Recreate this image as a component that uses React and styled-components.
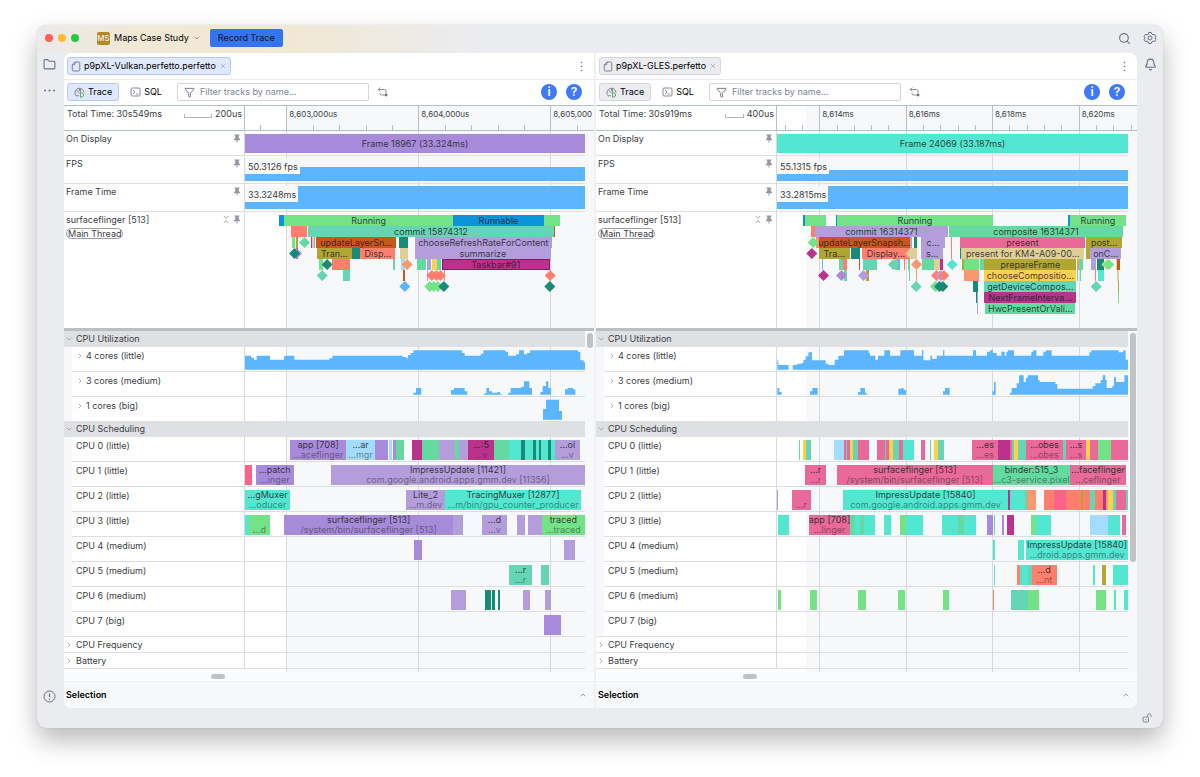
import React, { useState } from 'react';
import styled, { createGlobalStyle } from 'styled-components';
import { Search, Bell, Folder, ChevronDown, ChevronRight, ChevronUp, X, Filter } from 'lucide-react';

const c = {
  purple: '#a78bda',
  lilac: '#b39ddb',
  turq: '#53e6d1',
  green: '#74e388',
  sea: '#66d5b3',
  mint: '#64d9a0',
  runnable: '#0b94da',
  blue: '#5cb5ff',
  sky: '#a4dcff',
  brown: '#c7571b',
  olive: '#b0a632',
  coral: '#ff7f6e',
  teal: '#178a78',
  magenta: '#b9328b',
  tan: '#dfce96',
  yellow: '#fdd04f',
  salmon: '#f7996c',
  pink: '#e96a98',
  rose: '#ff6488',
};

// Slices are [start, end, color, title, subtitle], diamonds are [time, color]
const vulkan = {
  file: 'p9pXL-Vulkan.perfetto.perfetto',
  active: true,
  total: '30s549ms',
  scale: '200us',
  scaleWidth: 28,
  view: [15, 1035],
  shadeFrom: 138,
  major: [[139, '8,603,000us'], [535, '8,604,000us'], [931, '8,605,000']],
  minor: [60, 218, 297, 377, 456, 614, 693, 773, 852, 1010],
  frame: 'Frame 18967 (33.324ms)',
  frameColor: c.purple,
  fps: '50.3126 fps',
  fpsHeight: 14,
  frameTime: '33.3248ms',
  thumb: 15,
  threads: [
    { slices: [[117, 132, c.runnable], [132, 640, c.green, 'Running'], [640, 911, c.runnable, 'Runnable'], [911, 960, c.green]] },
    { slices: [[153, 201, c.coral], [204, 942, c.sea, 'commit 15874312'], [942, 946, c.brown]] },
    {
      slices: [[155, 166, c.green], [168, 173, c.olive], [212, 215, c.magenta], [217, 222, c.tan], [222, 226, c.lilac],
        [228, 469, c.brown, 'updateLayerSn…'], [477, 504, c.teal], [525, 935, c.lilac, 'chooseRefreshRateForContent']],
      diamonds: [[192, c.mint]],
    },
    {
      slices: [[167, 173, c.brown], [232, 335, c.olive, 'Tran…'], [336, 361, c.teal], [361, 466, c.coral, 'Disp…'],
        [480, 503, c.tan], [525, 932, c.lilac, 'summarize']],
      diamonds: [[168, c.purple], [162, c.teal]],
    },
    {
      slices: [[238, 248, c.green], [276, 330, c.coral], [460, 464, c.sea], [484, 496, c.sky], [530, 557, c.mint],
        [560, 574, c.lilac], [575, 592, c.yellow], [592, 604, c.mint], [605, 929, c.magenta, 'Taskbar#91', null, true]],
      diamonds: [[260, c.teal], [500, c.salmon]],
    },
    {
      slices: [[309, 329, c.sea], [489, 494, c.brown], [560, 563, c.lilac], [612, 615, c.lilac]],
      diamonds: [[245, c.sea], [574, c.coral], [588, c.coral], [600, c.coral], [929, c.coral]],
    },
    { slices: [], diamonds: [[493, c.blue], [568, c.green], [580, c.green], [592, c.green], [610, c.teal], [928, c.teal]] },
  ],
  cores: [
    [[15, 42], [33, 36], [42, 30], [50, 42], [90, 30], [132, 40], [137, 42], [163, 30], [268, 34], [277, 42], [488, 38],
      [498, 34], [504, 44], [512, 50], [520, 58], [666, 50], [674, 42], [722, 48], [730, 58], [796, 54], [804, 42],
      [828, 46], [837, 58], [852, 46], [861, 50], [870, 58], [1014, 54], [1021, 28], [1031, 22], [1035, 0]],
    [[520, 6], [528, 20], [544, 0], [633, 14], [642, 20], [674, 10], [682, 0], [732, 4], [739, 20], [747, 10], [756, 6],
      [772, 8], [780, 2], [787, 0], [804, 6], [812, 20], [844, 24], [852, 40], [868, 20], [876, 0], [901, 8],
      [908, 26], [918, 40], [925, 20], [933, 0], [975, 16], [983, 20], [999, 16], [1006, 0]],
    [[909, 32], [918, 60], [957, 26], [966, 0]],
  ],
  cpus: [
    [[150, 319, c.purple, 'app [708]', '…aceflinger'], [319, 404, c.sky, '…ar', '…mgr'], [404, 445, c.purple],
      [446, 456, c.sky], [458, 468, c.purple], [468, 492, c.mint], [515, 545, c.magenta], [545, 598, c.mint],
      [598, 646, c.lilac], [646, 658, c.mint], [658, 684, c.lilac], [684, 762, c.magenta, '…:5', '…v'],
      [762, 808, c.mint], [808, 945, c.turq], [843, 855, c.teal], [879, 889, c.teal], [896, 904, c.teal],
      [924, 932, c.teal], [945, 1020, c.lilac, '…ol', '…v']],
    [[15, 37, c.rose], [47, 162, c.purple, '…patch', '…inger'],
      [273, 1035, c.lilac, 'ImpressUpdate [11421]', 'com.google.android.apps.gmm.dev [11356]']],
    [[15, 150, c.turq, '…gMuxer', '…oducer'], [498, 615, c.lilac, 'Lite_2', '…m.dev'],
      [615, 1023, c.turq, 'TracingMuxer [12877]', '…m/bin/gpu_counter_producer']],
    [[15, 30, c.turq], [27, 90, c.green, '\u00a0', '…d'],
      [132, 640, c.purple, 'surfaceflinger [513]', '/system/bin/surfaceflinger [513]'], [640, 668, c.lilac],
      [726, 801, c.lilac, '…d', '…v'], [832, 855, c.lilac], [864, 905, c.lilac], [905, 1035, c.green, 'traced', '…traced']],
    [[522, 545, c.purple], [973, 1005, c.lilac]],
    [[807, 876, c.sea, '…r', '…r'], [904, 927, c.sea]],
    [[633, 677, c.lilac], [735, 752, c.teal], [756, 765, c.teal], [773, 780, c.teal], [848, 870, c.lilac], [914, 932, c.lilac]],
    [[912, 962, c.purple]],
  ],
};

const gles = {
  file: 'p9pXL-GLES.perfetto',
  active: false,
  total: '30s919ms',
  scale: '400us',
  scaleWidth: 19,
  view: [6, 1059],
  shadeFrom: 94,
  major: [[133, '8,614ms'], [392, '8,616ms'], [651, '8,618ms'], [911, '8,620ms']],
  minor: [29, 81, 185, 237, 289, 340, 444, 496, 548, 600, 703, 755, 807, 859, 963, 1015, 1067],
  frame: 'Frame 24069 (33.187ms)',
  frameColor: c.turq,
  fps: '55.1315 fps',
  fpsHeight: 11,
  frameTime: '33.2815ms',
  thumb: 229,
  threads: [
    {
      slices: [[85, 90, c.runnable], [90, 152, c.green], [182, 187, c.runnable], [187, 653, c.green, 'Running'],
        [879, 886, c.runnable], [886, 1052, c.green, 'Running']],
    },
    { slices: [[107, 120, c.coral], [120, 519, c.lilac, 'commit 16314371'], [522, 1044, c.mint, 'composite 16314371']] },
    {
      slices: [[122, 132, c.salmon], [132, 405, c.brown, 'updateLayerSnapsh…'], [406, 412, c.lilac], [417, 427, c.teal],
        [438, 510, c.lilac, 'c…'], [528, 531, c.coral], [555, 930, c.pink, 'present'], [934, 1041, c.olive, 'post…']],
      diamonds: [[113, c.green]],
    },
    {
      slices: [[132, 224, c.olive, 'Tra…'], [227, 256, c.teal], [260, 405, c.coral, 'Display…'], [405, 425, c.tan],
        [438, 505, c.lilac, 's…'], [528, 530, c.coral], [555, 558, c.teal],
        [558, 928, c.tan, 'present for KM4-A09-00…'], [934, 945, c.olive], [945, 1039, c.lilac, 'onC…']],
      diamonds: [[109, c.magenta], [406, c.tan]],
    },
    {
      slices: [[142, 145, c.blue], [191, 204, c.mint], [204, 216, c.coral], [252, 256, c.brown], [264, 305, c.sea],
        [360, 368, c.mint], [368, 376, c.blue], [386, 390, c.coral], [400, 404, c.mint], [441, 478, c.mint],
        [478, 494, c.tan], [494, 503, c.magenta], [561, 567, c.olive], [567, 612, c.green], [614, 626, c.mint],
        [628, 904, c.olive, 'prepareFrame'], [905, 912, c.salmon], [912, 924, c.mint], [948, 962, c.lilac],
        [966, 987, c.teal], [1022, 1027, c.tan], [1027, 1034, c.brown]],
      diamonds: [[354, c.sea], [423, c.salmon], [530, c.turq], [994, c.tan], [1000, c.green]],
    },
    {
      slices: [[208, 215, c.mint], [273, 276, c.coral], [277, 282, c.olive], [401, 404, c.mint], [422, 425, c.salmon],
        [567, 612, c.salmon], [628, 904, c.yellow, 'chooseCompositio…'], [905, 909, c.mint], [915, 919, c.sea],
        [960, 963, c.coral], [969, 986, c.turq], [1025, 1033, c.tan]],
      diamonds: [[144, c.magenta], [198, c.purple], [264, c.lilac], [483, c.coral], [496, c.lilac], [505, c.coral]],
    },
    {
      slices: [[594, 609, c.teal], [628, 904, c.sea, 'getDeviceCompos…'], [1029, 1033, c.olive]],
      diamonds: [[422, c.sea], [480, c.green], [492, c.teal], [502, c.teal], [962, c.sea]],
    },
    { slices: [[604, 607, c.teal], [607, 610, c.lilac], [628, 904, c.magenta, 'NextFrameInterva…'], [1029, 1032, c.green]] },
    { slices: [[607, 610, c.lilac], [631, 901, c.mint, 'HwcPresentOrVali…']] },
  ],
  cores: [
    [[7, 28], [10, 14], [41, 0], [53, 14], [67, 18], [80, 20], [85, 30], [92, 40], [100, 52], [111, 28], [152, 18],
      [160, 14], [179, 30], [190, 42], [207, 58], [281, 50], [285, 42], [301, 30], [309, 42], [328, 58], [345, 42],
      [376, 58], [417, 42], [441, 58], [445, 28], [466, 42], [471, 32], [485, 42], [504, 58], [508, 42], [594, 58],
      [603, 42], [636, 54], [645, 58], [654, 50], [665, 42], [679, 54], [689, 42], [694, 54], [699, 58], [717, 42],
      [769, 54], [775, 58], [784, 42], [805, 54], [813, 58], [830, 42], [943, 52], [949, 58], [1031, 52], [1045, 58],
      [1052, 30], [1059, 0]],
    [[7, 20], [13, 8], [20, 0], [105, 10], [112, 20], [128, 0], [249, 8], [256, 20], [270, 6], [275, 0], [370, 18],
      [379, 20], [386, 14], [393, 0], [504, 10], [510, 20], [524, 0], [652, 10], [657, 38], [662, 0], [705, 6],
      [710, 20], [725, 34], [732, 58], [746, 38], [753, 50], [758, 58], [789, 44], [794, 38], [841, 32], [847, 18],
      [953, 26], [961, 34], [977, 44], [983, 58], [991, 44], [995, 20], [1012, 26], [1017, 52], [1023, 38],
      [1048, 58], [1059, 0]],
    [],
  ],
  cpus: [
    [[71, 75, c.mint], [83, 93, c.yellow], [93, 109, c.sea], [178, 207, c.sky], [207, 212, c.pink], [212, 217, c.sea],
      [217, 224, c.pink], [224, 235, c.yellow], [235, 250, c.sea], [250, 281, c.pink], [305, 341, c.pink],
      [329, 334, c.sea], [341, 354, c.yellow], [354, 372, c.sea], [372, 384, c.pink], [385, 416, c.turq],
      [438, 449, c.pink], [464, 469, c.mint], [478, 488, c.yellow], [488, 508, c.sea], [591, 670, c.pink, '…es', '…es'],
      [670, 704, c.magenta], [704, 710, c.pink], [710, 717, c.sea], [717, 729, c.yellow], [729, 754, c.sea],
      [754, 863, c.pink, '…obes', '…obes'], [863, 872, c.sea], [872, 934, c.pink, '…s', '…s'], [934, 946, c.yellow],
      [946, 968, c.pink], [968, 1008, c.green], [1008, 1059, c.pink]],
    [[90, 153, c.pink, '…r', '…r'], [186, 653, c.pink, 'surfaceflinger [513]', '/system/bin/surfaceflinger [513]'],
      [653, 886, c.mint, 'binder:515_3', '…c3-service.pixel'], [886, 1052, c.pink, '…faceflinger', '…ceflinger']],
    [[6, 9, c.lilac], [50, 108, c.pink, '\u00a0', '…r'],
      [204, 699, c.turq, 'ImpressUpdate [15840]', 'com.google.android.apps.gmm.dev'], [699, 705, c.magenta],
      [705, 750, c.turq], [750, 756, c.sea], [756, 783, c.salmon], [807, 836, c.coral], [836, 874, c.rose],
      [874, 917, c.coral], [917, 925, c.olive], [925, 946, c.coral], [946, 960, c.sea], [960, 985, c.coral],
      [985, 992, c.magenta], [992, 1000, c.salmon], [1000, 1015, c.yellow], [1015, 1023, c.sea], [1023, 1053, c.pink],
      [1053, 1059, c.sea]],
    [[8, 41, c.turq], [101, 226, c.pink, 'app [708]', '…linger'], [226, 240, c.mint], [240, 300, c.turq],
      [255, 267, c.mint], [326, 348, c.turq], [375, 392, c.green], [392, 443, c.turq], [500, 603, c.turq],
      [550, 566, c.mint], [636, 654, c.purple], [656, 660, c.sea], [681, 687, c.purple], [695, 717, c.magenta],
      [768, 784, c.green], [784, 828, c.turq], [945, 999, c.sky], [999, 1035, c.turq], [1040, 1053, c.pink]],
    [[653, 660, c.turq], [730, 746, c.turq], [753, 1059, c.turq, 'ImpressUpdate [15840]', '…droid.apps.gmm.dev']],
    [[657, 661, c.turq], [725, 735, c.coral], [735, 760, c.turq], [760, 770, c.sea], [770, 845, c.coral, '…d', '…nt'],
      [955, 960, c.turq], [980, 992, c.olive], [1014, 1059, c.turq]],
    [[8, 18, c.green], [105, 127, c.green], [249, 273, c.green], [369, 389, c.green], [503, 522, c.green],
      [654, 658, c.coral], [707, 760, c.sea], [760, 791, c.green], [962, 993, c.green], [1017, 1022, c.turq],
      [1047, 1059, c.turq]],
    [],
  ],
};

const coreLabels = ['4 cores (little)', '3 cores (medium)', '1 cores (big)'];
const cpuLabels = ['little', 'little', 'little', 'little', 'medium', 'medium', 'medium', 'big'];

// Helper function to turn a trace time into a share of the visible window
const toPercent = (view, time) => `${((time - view[0]) / (view[1] - view[0])) * 100}%`;
const span = (view, from, to) => ({ left: toPercent(view, from), width: toPercent(view, view[0] + to - from) });

const areaPath = (points) => {
  if (!points.length) return '';
  let d = `M${points[0][0]} 68`;
  points.forEach(([x, h], i) => {
    d += `V${68 - h}`;
    if (points[i + 1]) d += `H${points[i + 1][0]}`;
    else d += `L${x} 68Z`;
  });
  return d;
};

const PinIcon = () => (
  <svg width="8" height="9" viewBox="0 0 16 18" aria-hidden="true">
    <path d="M3 1h10v2h-1.500v5L14 10.500v1.800H9V17H7v-4.700H2v-1.800L4.500 8V3H3z" fill="#94979e" />
  </svg>
);

const CollapseIcon = () => (
  <svg width="8" height="9" viewBox="0 0 16 18" fill="none" stroke="#8d9096" strokeWidth="1.600" aria-hidden="true">
    <path d="M3.500 2l4.500 4.500L12.500 2M3.500 16l4.500-4.500 4.500 4.500" />
  </svg>
);

const FileIcon = () => (
  <svg width="10" height="11" viewBox="0 0 20 22" fill="none" stroke="#6c707e" strokeWidth="1.700" aria-hidden="true">
    <path d="M8 2h7a2.500 2.500 0 0 1 2.500 2.500v13A2.500 2.500 0 0 1 15 20H5a2.500 2.500 0 0 1-2.500-2.500V7.500z" />
    <path d="M8 2v3.500a2 2 0 0 1-2 2H2.500" />
  </svg>
);

const TraceIcon = () => (
  <svg width="11" height="11" viewBox="0 0 22 22" fill="none" strokeWidth="1.600" aria-hidden="true">
    <path d="M10 17.500H4A8 8 0 0 1 2 12a9 9 0 0 1 18-1" stroke="#6c707e" />
    <path d="M11 3v5M6 6.500l5 6" stroke="#6c707e" />
    <path d="M13 10.500l6 3.500v4l-6 3z" fill="#e2f3e3" stroke="#3e9a4d" />
    <path d="M13 3.500v6" stroke="#3e9a4d" />
  </svg>
);

const SqlIcon = () => (
  <svg width="11" height="10" viewBox="0 0 22 20" fill="none" stroke="#6c707e" strokeWidth="1.600" aria-hidden="true">
    <rect x="2" y="2" width="18" height="16" rx="2" />
    <path d="M6 6.500l4 3.500-4 3.500M12 14h4.500" />
  </svg>
);

const UndoIcon = () => (
  <svg width="11" height="10" viewBox="0 0 22 20" fill="none" stroke="#6c707e" strokeWidth="1.600" aria-hidden="true">
    <path d="M6.500 1L2.500 5l4 4M2.500 5H15a3 3 0 0 1 3 3v6M6 12v1a3 3 0 0 0 3 3h7" />
    <path d="M16 14h4.500v4.500H16z" fill="#6c707e" stroke="none" />
  </svg>
);

const GearIcon = () => (
  <svg width="14" height="14" viewBox="0 0 28 28" fill="none" stroke="#6c707e" strokeWidth="2" aria-hidden="true">
    <path d="M11.500 3h5l1.200 3.300 2.300 1.300 3.500-.6 2.500 4.300-2.300 2.700 2.300 2.700-2.500 4.300-3.500-.6-2.300 1.300L16.500 25h-5l-1.200-3.300L8 20.400l-3.500.6L2 16.700 4.300 14 2 11.300 4.500 7l3.500.6 2.300-1.300z" strokeLinejoin="round" />
    <circle cx="14" cy="14" r="4" />
  </svg>
);

const AlertIcon = () => (
  <svg width="13" height="13" viewBox="0 0 26 26" fill="none" stroke="#6c707e" strokeWidth="2" aria-hidden="true">
    <circle cx="13" cy="13" r="11" />
    <path d="M13 7v7M13 17v2.500" strokeWidth="2.400" />
  </svg>
);

const UnlockIcon = () => (
  <svg width="10" height="10" viewBox="0 0 20 20" fill="none" stroke="#6c707e" strokeWidth="1.600" aria-hidden="true">
    <rect x="2" y="8" width="11" height="10" rx="2" />
    <path d="M11 8V5a3.500 3.500 0 0 1 7 0v3M7.500 12v2.500" />
  </svg>
);

const DotsIcon = ({ vertical }) => (
  <svg width="13" height="13" viewBox="0 0 26 26" fill="#6c707e" aria-hidden="true">
    {(vertical ? [5, 13, 21] : [4, 13, 22]).map((p) => (
      <circle key={p} cx={vertical ? 13 : p} cy={vertical ? p : 13} r={vertical ? 1.6 : 2} />
    ))}
  </svg>
);

const Slices = ({ view, items, height }) =>
  items.map(([from, to, color, title, sub, selected], i) => (
    <Slice key={i} $color={color} $height={height} $selected={selected} style={span(view, from, to)}>
      {title && <span>{title}</span>}
      {sub && <SliceSub>{sub}</SliceSub>}
    </Slice>
  ));

const Backdrop = ({ trace }) => (
  <BackdropArea>
    <Shade style={{ left: toPercent(trace.view, trace.shadeFrom) }} />
    {trace.major.map(([time]) => (
      <GridLine key={time} style={{ left: toPercent(trace.view, time) }} />
    ))}
  </BackdropArea>
);

const TracePane = ({ trace, name }) => {
  const [filter, setFilter] = useState('');
  const { view } = trace;

  return (
    <Pane>
      <TabBar>
        <FileTab $active={trace.active}>
          <FileIcon />
          {trace.file}
          <X size={8} color="#9ea2ad" strokeWidth={2} />
        </FileTab>
        <IconButton aria-label="Tab options"><DotsIcon vertical /></IconButton>
      </TabBar>
      <Toolbar>
        <ModeButton $active={trace.active} $selected><TraceIcon />Trace</ModeButton>
        <ModeButton><SqlIcon />SQL</ModeButton>
        <FilterBox htmlFor={`filter-${name}`}>
          <Filter size={11} color="#6c707e" strokeWidth={2} />
          <FilterInput
            id={`filter-${name}`}
            aria-label="Filter tracks by name"
            placeholder="Filter tracks by name..."
            value={filter}
            onChange={(e) => setFilter(e.target.value)}
          />
        </FilterBox>
        <IconButton aria-label="Reset"><UndoIcon /></IconButton>
        <Spacer />
        <RoundButton aria-label="Info">i</RoundButton>
        <RoundButton aria-label="Help">?</RoundButton>
      </Toolbar>

      <Ruler>
        <RulerInfo>
          <span>Total Time: {trace.total}</span>
          <Scale>
            <ScaleBar $width={trace.scaleWidth} />
            {trace.scale}
          </Scale>
        </RulerInfo>
        <RulerLane>
          <RulerShade style={{ left: toPercent(view, trace.shadeFrom) }} />
          {trace.minor.map((time) => (
            <MinorTick key={time} style={{ left: toPercent(view, time) }} />
          ))}
          {trace.major.map(([time, label]) => (
            <MajorTick key={time} style={{ left: toPercent(view, time) }}>{label}</MajorTick>
          ))}
        </RulerLane>
      </Ruler>

      <Pinned>
        <Tracks>
          <Backdrop trace={trace} />
          <Track $height={24}>
            <TrackLabel>On Display<TrackTools><PinIcon /></TrackTools></TrackLabel>
            <Lane>
              <Slices view={view} items={[[view[0], view[1], trace.frameColor, trace.frame]]} height={19} />
            </Lane>
          </Track>
          <Track $height={27}>
            <TrackLabel>FPS<TrackTools><PinIcon /></TrackTools></TrackLabel>
            <Lane>
              <CounterBar $height={trace.fpsHeight} />
              <CounterValue>{trace.fps}</CounterValue>
            </Lane>
          </Track>
          <Track $height={27}>
            <TrackLabel>Frame Time<TrackTools><PinIcon /></TrackTools></TrackLabel>
            <Lane>
              <CounterBar $height={23} />
              <CounterValue>{trace.frameTime}</CounterValue>
            </Lane>
          </Track>
          <Track $height={116}>
            <TrackLabel>
              <div>
                surfaceflinger [513]
                <ThreadBadge>Main Thread</ThreadBadge>
              </div>
              <TrackTools><CollapseIcon /><PinIcon /></TrackTools>
            </TrackLabel>
            <Lane>
              {trace.threads.map((row, i) => (
                <Depth key={i}>
                  <Slices view={view} items={row.slices} height={11} />
                  {(row.diamonds || []).map(([time, color], j) => (
                    <Diamond key={j} $color={color} style={{ left: toPercent(view, time) }} />
                  ))}
                </Depth>
              ))}
            </Lane>
          </Track>
        </Tracks>
      </Pinned>

      <Scroller>
        <Tracks>
          <Backdrop trace={trace} />
          <GroupHeader><ChevronDown size={8} color="#8d9096" />CPU Utilization</GroupHeader>
          <Group>
            {coreLabels.map((label, i) => (
              <Track key={label} $height={24}>
                <NestedLabel><ChevronRight size={8} color="#8d9096" />{label}</NestedLabel>
                <Lane>
                  <Area viewBox={`${view[0]} 0 ${view[1] - view[0]} 72`} preserveAspectRatio="none" aria-hidden="true">
                    <path d={areaPath(trace.cores[i])} fill={c.blue} />
                  </Area>
                </Lane>
              </Track>
            ))}
          </Group>
          <GroupHeader><ChevronDown size={8} color="#8d9096" />CPU Scheduling</GroupHeader>
          <Group>
            {cpuLabels.map((kind, i) => (
              <Track key={i} $height={24}>
                <NestedLabel>CPU {i} ({kind})</NestedLabel>
                <Lane><Slices view={view} items={trace.cpus[i]} height={20} /></Lane>
              </Track>
            ))}
          </Group>
          <ClosedGroup><ChevronRight size={8} color="#8d9096" />CPU Frequency</ClosedGroup>
          <ClosedGroup><ChevronRight size={8} color="#8d9096" />Battery</ClosedGroup>
          <TrackEnd />
        </Tracks>
        <Gutter><Thumb $height={trace.thumb} /></Gutter>
      </Scroller>
      <HorizontalScroll><HorizontalThumb /></HorizontalScroll>
      <SelectionBar>
        Selection
        <ChevronUp size={8} color="#6c707e" strokeWidth={2} />
      </SelectionBar>
    </Pane>
  );
};

const App = () => (
  <Page>
    <GlobalStyle />
    <Window>
      <TitleBar>
        <Lights>
          <Light $color="#ff5f57" />
          <Light $color="#febc2e" />
          <Light $color="#28c840" />
        </Lights>
        <ProjectButton>
          <ProjectBadge>MS</ProjectBadge>
          Maps Case Study
          <ChevronDown size={8} color="#6c707e" />
        </ProjectButton>
        <RecordButton>Record Trace</RecordButton>
        <Spacer />
        <TitleTools>
          <IconButton aria-label="Search"><Search size={13} color="#6c707e" strokeWidth={2} /></IconButton>
          <IconButton aria-label="Settings"><GearIcon /></IconButton>
        </TitleTools>
      </TitleBar>
      <Body>
        <LeftRail>
          <IconButton aria-label="Project"><Folder size={13} color="#6c707e" strokeWidth={2} /></IconButton>
          <IconButton aria-label="More"><DotsIcon /></IconButton>
          <Spacer />
          <IconButton aria-label="Problems"><AlertIcon /></IconButton>
        </LeftRail>
        <Content>
          <TracePane trace={vulkan} name="vulkan" />
          <TracePane trace={gles} name="gles" />
        </Content>
        <Rail>
          <IconButton aria-label="Notifications"><Bell size={13} color="#6c707e" strokeWidth={2} /></IconButton>
        </Rail>
      </Body>
      <StatusBar>
        <IconButton aria-label="Unlock"><UnlockIcon /></IconButton>
      </StatusBar>
    </Window>
  </Page>
);

// Styled Components
const GlobalStyle = createGlobalStyle`
  * {
    box-sizing: border-box;
  }

  body {
    margin: 0;
    background: #fff;
    color: #3c4043;
    font-family: Inter, 'Liberation Sans', sans-serif;
    font-size: 9px;
    line-height: 12px;
  }

  button, input {
    margin: 0;
    padding: 0;
    border: none;
    background: none;
    color: inherit;
    font: inherit;
  }

  button {
    cursor: pointer;
  }

  svg {
    display: block;
    flex-shrink: 0;
  }
`;

const Page = styled.div`
  padding: 25px 37px 49px;
`;

const Window = styled.main`
  border-radius: 9px;
  background: #ebecf0;
  box-shadow: 0 0 1px rgba(0, 0, 0, 0.25), 0 12px 26px rgba(0, 0, 0, 0.28);
`;

const TitleBar = styled.header`
  display: flex;
  align-items: center;
  height: 28px;
  padding: 0 6px 2px 8px;
  border-radius: 9px 9px 0 0;
  background: linear-gradient(90deg, #ebeaeb 0, #f1e9d6 90px, #f1e8d3 250px, #ebecf0 440px);
`;

const Lights = styled.div`
  display: flex;
  gap: 5px;
`;

const Light = styled.span`
  width: 8px;
  height: 8px;
  border-radius: 50%;
  background: ${(props) => props.$color};
`;

const ProjectButton = styled.button`
  display: flex;
  align-items: center;
  gap: 4px;
  margin: 0 9px 0 18px;
  color: #000;
`;

const ProjectBadge = styled.span`
  width: 13px;
  height: 13px;
  border-radius: 2px;
  background: #b7882a;
  color: #fff;
  font-size: 8px;
  line-height: 13px;
  text-align: center;
`;

const RecordButton = styled.button`
  height: 18px;
  padding: 0 8px;
  border-radius: 2px;
  background: #3574f0;
  color: #08132b;
`;

const TitleTools = styled.div`
  display: flex;
  gap: 12px;
`;

const Spacer = styled.div`
  flex: 1;
`;

const IconButton = styled.button`
  display: flex;
  align-items: center;
  justify-content: center;
`;

const Body = styled.div`
  display: flex;
`;

const Rail = styled.nav`
  display: flex;
  flex-direction: column;
  align-items: center;
  gap: 13px;
  width: 26px;
  padding: 5px 0;
`;

const LeftRail = styled(Rail)`
  width: 27px;
  padding-right: 2px;
`;

const Content = styled.div`
  flex: 1;
  display: grid;
  grid-template-columns: 530fr 541fr;
  gap: 2px;
  min-width: 0;
  overflow: hidden;
  border-radius: 8px;
  background: #f0f1f4;
`;

const Pane = styled.section`
  min-width: 0;
  overflow: hidden;
  background: #fff;
`;

const TabBar = styled.div`
  display: flex;
  align-items: center;
  justify-content: space-between;
  height: 27px;
  padding: 0 6px 0 3px;
  border-bottom: 1px solid #ebecf0;
`;

const FileTab = styled.button`
  display: flex;
  align-items: center;
  gap: 3px;
  height: 18px;
  padding: 0 3px;
  border: 1px solid ${(props) => (props.$active ? '#b7c8f8' : '#d3d5db')};
  border-radius: 3px;
  background: ${(props) => (props.$active ? '#e0e8fd' : '#ebecf0')};
  color: #000;
`;

const Toolbar = styled.div`
  display: flex;
  align-items: center;
  height: 25px;
  padding: 0 12px 1px 3px;
`;

const ModeButton = styled.button`
  display: flex;
  align-items: center;
  gap: 3px;
  height: 18px;
  margin-right: 4px;
  padding: 0 6px;
  border: 1px solid ${(props) => (!props.$selected ? 'transparent' : props.$active ? '#b7c8f8' : '#d3d5db')};
  border-radius: 3px;
  background: ${(props) => (!props.$selected ? 'transparent' : props.$active ? '#e0e8fd' : '#ebecf0')};
  color: #000;
`;

const FilterBox = styled.label`
  display: flex;
  align-items: center;
  gap: 5px;
  width: 192px;
  height: 18px;
  margin: 0 8px 0 4px;
  padding: 0 6px;
  border: 1px solid #d3d5db;
  border-radius: 2px;
`;

const FilterInput = styled.input`
  flex: 1;
  min-width: 0;
  outline: none;

  &::placeholder {
    color: #818594;
    opacity: 1;
  }
`;

const RoundButton = styled.button`
  width: 16px;
  height: 16px;
  margin-left: 9px;
  border-radius: 50%;
  background: #4079f6;
  color: #fff;
  font-size: 12px;
  font-weight: 600;
  line-height: 16px;
`;

const Ruler = styled.div`
  display: flex;
  height: 26px;
  padding-right: 9px;
  border-top: 1px solid #b4c0c6;
  border-bottom: 1px solid #b4c0c6;
`;

const RulerInfo = styled.div`
  display: flex;
  justify-content: space-between;
  width: 181px;
  padding: 2px 2px 0 3px;
  border-right: 1px solid #b4c0c6;
`;

const Scale = styled.span`
  display: flex;
  gap: 3px;
`;

const ScaleBar = styled.span`
  width: ${(props) => props.$width}px;
  height: 4px;
  margin-top: 6px;
  border: 1px solid #b4b8be;
  border-top: none;
`;

const RulerLane = styled.div`
  flex: 1;
  position: relative;
`;

const RulerShade = styled.div`
  position: absolute;
  top: 0;
  bottom: 0;
  right: -9px;
  background: #f6f8fa;
`;

const MinorTick = styled.span`
  position: absolute;
  bottom: 0;
  height: 5px;
  border-left: 1px solid #b4c0c6;
`;

const MajorTick = styled.span`
  position: absolute;
  top: 0;
  bottom: 0;
  padding: 2px 0 0 2px;
  border-left: 1px solid #b4c0c6;
  font-size: 8px;
  white-space: nowrap;
`;

const Pinned = styled.div`
  padding-right: 9px;
  background: #f6f8fa;
  border-bottom: 3px solid #bdbec0;
`;

const Scroller = styled.div`
  display: flex;
  background: #f6f8fa;
`;

const Tracks = styled.div`
  flex: 1;
  position: relative;
  min-width: 0;
  background: #fff;
`;

const BackdropArea = styled.div`
  position: absolute;
  top: 0;
  bottom: 0;
  left: 181px;
  right: 0;
`;

const Shade = styled.div`
  position: absolute;
  top: 0;
  bottom: 0;
  right: 0;
  background: #f6f8fa;
`;

const GridLine = styled.div`
  position: absolute;
  top: 0;
  bottom: 0;
  border-left: 1px solid #d6d9de;
`;

const Track = styled.div`
  position: relative;
  display: flex;
  height: ${(props) => props.$height + 1}px;
  border-bottom: 1px solid #dcdee1;

  &:last-child {
    height: ${(props) => props.$height}px;
    border-bottom: none;
  }
`;

const TrackLabel = styled.div`
  display: flex;
  justify-content: space-between;
  width: 181px;
  padding: 2px 3px 0 2px;
  border-right: 1px solid #d6d9de;
  background: #fff;
`;

const TrackTools = styled.span`
  display: flex;
  gap: 3px;
  padding-top: 1px;
`;

const ThreadBadge = styled.span`
  display: block;
  width: fit-content;
  height: 11px;
  margin-top: 2px;
  padding: 0 1px;
  border: 1px solid #9a9da3;
  border-radius: 6px;
  line-height: 9px;
`;

const Lane = styled.div`
  flex: 1;
  position: relative;
  min-width: 0;
  padding-top: 3px;
`;

const Slice = styled.div`
  position: absolute;
  height: ${(props) => props.$height}px;
  display: flex;
  flex-direction: column;
  align-items: center;
  justify-content: center;
  overflow: hidden;
  border: ${(props) => (props.$selected ? '1px solid #8a1568' : 'none')};
  background: ${(props) => props.$color};
  color: rgba(32, 33, 36, 0.85);
  line-height: 10px;
  white-space: nowrap;
`;

const SliceSub = styled.span`
  color: rgba(32, 33, 36, 0.5);
`;

const Depth = styled.div`
  position: relative;
  height: 11px;
`;

const Diamond = styled.span`
  position: absolute;
  width: 11px;
  height: 11px;
  margin-left: -5px;
  background: ${(props) => props.$color};
  clip-path: polygon(50% 0, 100% 50%, 50% 100%, 0 50%);
`;

const CounterBar = styled.div`
  position: absolute;
  bottom: 2px;
  left: 0;
  right: 0;
  height: ${(props) => props.$height}px;
  background: ${c.blue};
`;

const CounterValue = styled.span`
  position: absolute;
  top: 2px;
  left: 0;
  height: 16px;
  padding: 0 2px 0 3px;
  background: #f6f8fa;
  line-height: 18px;
`;

const GroupHeader = styled.button`
  position: relative;
  display: flex;
  align-items: center;
  gap: 3px;
  width: 100%;
  height: 16px;
  padding-left: 1px;
  background: #dfe0e4;
`;

const ClosedGroup = styled.button`
  position: relative;
  display: flex;
  align-items: center;
  gap: 3px;
  width: 100%;
  height: 16px;
  padding-left: 1px;
  border-top: 1px solid #dcdee1;
  background: linear-gradient(90deg, #fff 180px, transparent 180px);

  &::before {
    content: '';
    position: absolute;
    top: 0;
    bottom: 0;
    left: 180px;
    border-left: 1px solid #d6d9de;
  }
`;

const TrackEnd = styled.div`
  position: relative;
  height: 4px;
  border-top: 1px solid #dcdee1;
`;

const Group = styled.div`
  position: relative;
  border-left: 8px solid #f6f8fa;
`;

const NestedLabel = styled.div`
  display: flex;
  align-items: flex-start;
  gap: 2px;
  width: 173px;
  padding: 3px 0 0 4px;
  border-right: 1px solid #d6d9de;
  background: #fff;

  svg {
    margin-top: 2px;
  }
`;

const Area = styled.svg`
  position: absolute;
  top: 0;
  left: 0;
  width: 100%;
  height: 24px;
`;

const Gutter = styled.div`
  width: 9px;
  padding: 2px;
`;

const Thumb = styled.div`
  width: 6px;
  height: ${(props) => props.$height}px;
  border-radius: 3px;
  background: #c1c2c4;
`;

const HorizontalScroll = styled.div`
  height: 10px;
  padding: 2px 0 0 147px;
  border-bottom: 1px solid #f0f1f3;
  background: #fafbfc;
`;

const HorizontalThumb = styled.div`
  width: 14px;
  height: 5px;
  border-radius: 3px;
  background: #c1c2c4;
`;

const SelectionBar = styled.footer`
  display: flex;
  align-items: center;
  justify-content: space-between;
  height: 26px;
  padding: 0 7px 0 2px;
  background: #f6f8fa;
  color: #000;
  font-weight: 600;
`;

const StatusBar = styled.div`
  display: flex;
  justify-content: flex-end;
  height: 20px;
  padding: 0 11px 0 0;
`;

export default App;
